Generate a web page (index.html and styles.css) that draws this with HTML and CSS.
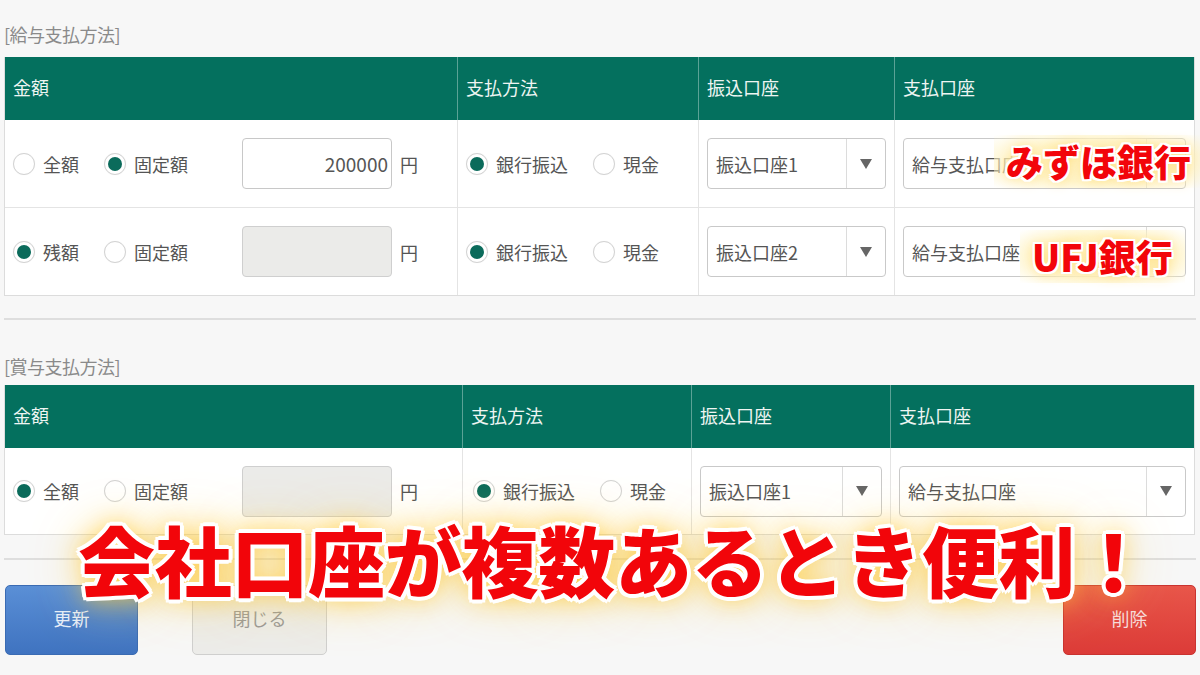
FILE: index.html
```html
<!DOCTYPE html>
<html lang="ja">
<head>
<meta charset="utf-8">
<title>給与支払方法</title>
<link rel="stylesheet" href="styles.css">
</head>
<body>
<div class="page">
  <section class="pay">
    <div class="sec-title sec-title-first">[給与支払方法]</div>
    <div class="grid grid-a">
      <div class="th">金額</div>
      <div class="th">支払方法</div>
      <div class="th">振込口座</div>
      <div class="th th-last">支払口座</div>

      <div class="td amount">
        <div class="choices">
          <label class="opt"><span class="radio"></span><span>全額</span></label>
          <label class="opt"><span class="radio checked"></span><span>固定額</span></label>
        </div>
        <div class="input">200000</div>
        <span class="yen">円</span>
      </div>
      <div class="td">
        <div class="choices">
          <label class="opt"><span class="radio checked"></span><span>銀行振込</span></label>
          <label class="opt"><span class="radio"></span><span>現金</span></label>
        </div>
      </div>
      <div class="td">
        <div class="select"><span class="select-text">振込口座1</span><span class="select-arrow"><i class="tri"></i></span></div>
      </div>
      <div class="td td-last">
        <div class="select"><span class="select-text">給与支払口座</span><span class="select-arrow"><i class="tri"></i></span></div>
      </div>

      <div class="td amount row-last">
        <div class="choices">
          <label class="opt"><span class="radio checked"></span><span>残額</span></label>
          <label class="opt"><span class="radio"></span><span>固定額</span></label>
        </div>
        <div class="input disabled"></div>
        <span class="yen">円</span>
      </div>
      <div class="td row-last">
        <div class="choices">
          <label class="opt"><span class="radio checked"></span><span>銀行振込</span></label>
          <label class="opt"><span class="radio"></span><span>現金</span></label>
        </div>
      </div>
      <div class="td row-last">
        <div class="select"><span class="select-text">振込口座2</span><span class="select-arrow"><i class="tri"></i></span></div>
      </div>
      <div class="td td-last row-last">
        <div class="select"><span class="select-text">給与支払口座</span><span class="select-arrow"><i class="tri"></i></span></div>
      </div>
    </div>
  </section>

  <div class="sep sep-first"></div>

  <section class="pay">
    <div class="sec-title sec-title-second">[賞与支払方法]</div>
    <div class="grid grid-b">
      <div class="th">金額</div>
      <div class="th">支払方法</div>
      <div class="th">振込口座</div>
      <div class="th th-last">支払口座</div>

      <div class="td amount row-last">
        <div class="choices">
          <label class="opt"><span class="radio checked"></span><span>全額</span></label>
          <label class="opt"><span class="radio"></span><span>固定額</span></label>
        </div>
        <div class="input disabled"></div>
        <span class="yen">円</span>
      </div>
      <div class="td row-last method-b">
        <div class="choices">
          <label class="opt"><span class="radio checked"></span><span>銀行振込</span></label>
          <label class="opt"><span class="radio"></span><span>現金</span></label>
        </div>
      </div>
      <div class="td row-last">
        <div class="select"><span class="select-text">振込口座1</span><span class="select-arrow"><i class="tri"></i></span></div>
      </div>
      <div class="td td-last row-last">
        <div class="select"><span class="select-text">給与支払口座</span><span class="select-arrow"><i class="tri"></i></span></div>
      </div>
    </div>
  </section>

  <div class="sep sep-second"></div>

  <div class="actions">
    <button class="btn btn-update">更新</button>
    <button class="btn btn-close">閉じる</button>
    <span class="spacer"></span>
    <button class="btn btn-delete">削除</button>
  </div>

  <div class="callout callout-mizuho">みずほ銀行</div>
  <div class="callout callout-ufj">UFJ銀行</div>
  <div class="headline">会社口座が複数あるとき便利！</div>
</div>
</body>
</html>
```

FILE: styles.css
```css
* { box-sizing: border-box; }

html, body {
  margin: 0;
  padding: 0;
  width: 1200px;
  height: 675px;
  overflow: hidden;
  background: #f7f7f7;
  font-family: "Noto Sans CJK JP", "Noto Sans", sans-serif;
  color: #555;
}

.page {
  position: relative;
  width: 1200px;
  height: 675px;
  padding: 22px 5px 0 4px;
}

.sec-title {
  font-size: 18px;
  line-height: 24px;
  height: 24px;
  color: #8a8a8a;
  letter-spacing: -0.5px;
}
.sec-title-first { margin-bottom: 11px; }
.sec-title-second { margin-top: 34px; margin-bottom: 7px; }

.grid {
  display: grid;
  width: 1191px;
  border: 1px solid #dcdcdc;
  border-top: none;
  background: #fff;
}
.grid-a {
  grid-template-columns: 453px 241px 196px 1fr;
  grid-template-rows: 63px 88px 87px;
}
.grid-b {
  grid-template-columns: 458px 229px 199px 1fr;
  grid-template-rows: 63px 86px;
}

.th {
  background: #04705e;
  color: #eef5f2;
  font-size: 18px;
  display: flex;
  align-items: center;
  padding: 0 8px 4px;
  border-right: 1px solid rgba(255,255,255,0.35);
}
.th-last { border-right: none; }

.td {
  display: flex;
  align-items: center;
  padding: 0 8px;
  border-right: 1px solid #e4e4e4;
  border-bottom: 1px solid #e4e4e4;
  font-size: 18px;
  color: #555;
}
.td-last { border-right: none; }
.row-last { border-bottom: none; }
.method-b { padding-left: 10px; }

.choices {
  display: flex;
  align-items: center;
  gap: 25px;
}
.amount .choices { width: 229px; }

.opt {
  display: flex;
  align-items: center;
  gap: 8px;
  white-space: nowrap;
}

.radio {
  width: 22px;
  height: 22px;
  border-radius: 50%;
  border: 1px solid #d2d2d2;
  background: #fff;
  display: flex;
  align-items: center;
  justify-content: center;
  box-shadow: 0 0 1px rgba(0,0,0,0.08);
}
.radio.checked::after {
  content: "";
  width: 14px;
  height: 14px;
  border-radius: 50%;
  background: #0b6b5b;
}

.input {
  width: 150px;
  height: 51px;
  border: 1px solid #c8c8c8;
  border-radius: 4px;
  background: #fff;
  font-size: 19px;
  color: #555;
  display: flex;
  align-items: center;
  justify-content: flex-end;
  padding-right: 3px;
}
.input.disabled {
  background: #ebebe9;
  border-color: #cfcfcf;
}
.yen {
  margin-left: 8px;
  font-size: 18px;
  color: #555;
}

.select {
  display: flex;
  width: 100%;
  height: 51px;
  border: 1px solid #c9c9c9;
  border-radius: 4px;
  background: #fff;
}
.select-text {
  flex: 1;
  display: flex;
  align-items: center;
  padding-left: 8px;
  font-size: 18px;
  color: #555;
  white-space: nowrap;
  overflow: hidden;
}
.select-arrow {
  width: 39px;
  border-left: 1px solid #dcdcdc;
  display: flex;
  align-items: center;
  justify-content: center;
}
.tri {
  width: 0;
  height: 0;
  border-left: 6px solid transparent;
  border-right: 6px solid transparent;
  border-top: 10px solid #666;
}

.sep {
  width: 1192px;
  height: 2px;
  background: #dedede;
}
.sep-first { margin-top: 22px; }
.sep-second { margin-top: 23px; }

.actions {
  display: flex;
  align-items: center;
  margin-top: 25px;
  width: 1192px;
}
.spacer { flex: 1; }
.btn {
  height: 70px;
  border-radius: 5px;
  font-family: "Noto Sans CJK JP", sans-serif;
  font-size: 18px;
  padding: 0 0 4px;
}
.btn-update {
  width: 133px;
  margin-left: 1px;
  background: linear-gradient(#5a8fd6, #3f73c0);
  border: 1px solid #3a6bb3;
  color: #e6eefa;
}
.btn-close {
  width: 135px;
  margin-left: 54px;
  background: #ececea;
  border: 1px solid #cfcfcf;
  color: #999;
}
.btn-delete {
  width: 133px;
  background: linear-gradient(#e8564a, #dc3b38);
  border: 1px solid #c93330;
  color: #f6dcdc;
}

/* overlays */
.callout {
  position: absolute;
  color: #f2050a;
  font-weight: 900;
  font-size: 37px;
  line-height: 37px;
  white-space: nowrap;
  padding: 8px 12px;
  margin: -8px -12px;
  background: radial-gradient(ellipse at center, rgba(255,246,208,0.95) 0%, rgba(255,244,198,0.85) 55%, rgba(255,245,200,0) 100%);
  text-shadow:
    2px 0 0 #fff, -2px 0 0 #fff, 0 2px 0 #fff, 0 -2px 0 #fff,
    2px 2px 0 #fff, -2px 2px 0 #fff, 2px -2px 0 #fff, -2px -2px 0 #fff,
    0 0 14px rgba(255,210,80,0.9);
}
.callout-mizuho { left: 1006px; top: 143px; }
.callout-ufj { left: 1032px; top: 238px; }

.headline {
  position: absolute;
  left: 78px;
  top: 520px;
  color: #f2050a;
  font-weight: 900;
  font-size: 77px;
  line-height: 77px;
  letter-spacing: -0.3px;
  white-space: nowrap;
  text-shadow:
    4px 0 0 #fff, -4px 0 0 #fff, 0 4px 0 #fff, 0 -4px 0 #fff,
    3px 3px 0 #fff, -3px 3px 0 #fff, 3px -3px 0 #fff, -3px -3px 0 #fff,
    0 0 24px rgba(255,200,50,0.95), 0 0 50px rgba(255,210,80,0.8);
}
.headline::before {
  content: "";
  position: absolute;
  left: -70px;
  right: -70px;
  top: -40px;
  bottom: -45px;
  z-index: -1;
  background: radial-gradient(ellipse at center, rgba(255,220,110,0.6) 0%, rgba(255,228,140,0.4) 50%, rgba(255,240,190,0) 75%);
}
```
